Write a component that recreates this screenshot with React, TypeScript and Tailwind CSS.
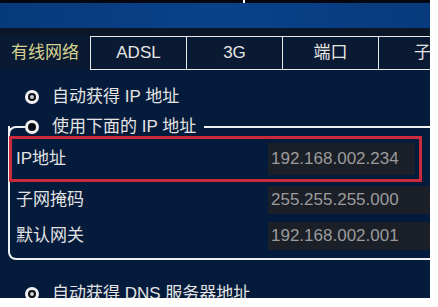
const tabs = ["有线网络", "ADSL", "3G", "端口", "子网"];

const rows = [
  { label: "IP地址", value: "192.168.002.234", boxed: true, gap: "" },
  { label: "子网掩码", value: "255.255.255.000", boxed: false, gap: "mt-[4px]" },
  { label: "默认网关", value: "192.168.002.001", boxed: false, gap: "mt-[8px]" },
];

function Radio({ checked }: { checked: boolean }) {
  return (
    <span className="flex h-[14px] w-[14px] shrink-0 items-center justify-center rounded-full border-[3px] border-[#f2f2f2] bg-[#0c0c14]">
      {checked && <span className="h-[4px] w-[4px] rounded-full bg-[#cfcfcf]" />}
    </span>
  );
}

export default function App() {
  return (
    <div className="h-[307px] w-[438px] overflow-hidden bg-white font-['Liberation_Sans','Noto_Sans_CJK_SC',sans-serif]">
      <div className="flex h-[298px] w-[430px] flex-col overflow-hidden bg-[#051b3b]">
        <div className="relative h-[3px] shrink-0 bg-[#03070f]">
          <span className="absolute left-[243px] top-0 h-[3px] w-[2px] bg-white" />
        </div>
        <div className="h-[25px] shrink-0 bg-gradient-to-r from-[#073a7c] via-[#0a4189] to-[#073b7e]" />
        <div className="h-[8px] shrink-0 bg-[#0b1628]" />

        <div className="flex h-[34px] shrink-0 overflow-hidden bg-[#0a1a33]">
          {tabs.map((t, i) => (
            <div
              key={t}
              className={
                i === 0
                  ? "flex w-[90px] shrink-0 items-center justify-center text-[17px] text-[#d6d38e]"
                  : i === 4
                    ? "flex w-[96px] shrink-0 items-center border-y border-l border-[#e8e8e8] pl-[35px] text-[17px] text-[#e6e6e6]"
                    : "flex w-[96px] shrink-0 items-center justify-center border-y border-l border-[#e8e8e8] text-[17px] text-[#e6e6e6]"
              }
            >
              <span className="whitespace-nowrap">{t}</span>
            </div>
          ))}
        </div>

        <div className="flex shrink-0 flex-col pl-[8px] pt-[17px]">
          <div className="flex h-[20px] items-center gap-[13px] pl-[17px] text-[17px] text-[#e4e4e4]">
            <Radio checked />
            <span>自动获得 IP 地址</span>
          </div>

          <div className="mt-[10px] flex h-[20px] items-center">
            <span className="mt-[9px] h-[10px] w-[17px] shrink-0 self-start rounded-tl-[8px] border-l-2 border-t-2 border-[#f0f0f0]" />
            <div className="flex items-center gap-[13px] pr-[8px] text-[17px] text-[#e4e4e4]">
              <Radio checked={false} />
              <span>使用下面的 IP 地址</span>
            </div>
            <span className="h-[2px] flex-1 bg-[#f0f0f0]" />
          </div>

          <div className="-mt-[11px] flex flex-col rounded-bl-[8px] border-b-2 border-l-2 border-[#f0f0f0] pb-[8px] pt-[10px]">
            {rows.map((r) => (
              <div
                key={r.label}
                className={
                  r.boxed
                    ? "-ml-[1px] mr-[8px] flex h-[46px] items-center border-[3px] border-[#cc2a3a] pl-[4px]"
                    : `${r.gap} flex h-[28px] items-center pl-[6px]`
                }
              >
                <span className="w-[252px] shrink-0 text-[17px] text-[#e2e2e2]">{r.label}</span>
                <span
                  className={
                    r.boxed
                      ? "mr-[4px] flex h-[32px] flex-1 items-center bg-[#1b1f28] pl-[3px] text-[17px] text-[#9b9b9b]"
                      : "flex h-[28px] flex-1 items-center bg-[#1b1f28] pl-[3px] text-[17px] text-[#9b9b9b]"
                  }
                >
                  {r.value}
                </span>
              </div>
            ))}
          </div>

          <div className="mt-[24px] flex h-[20px] items-center gap-[13px] pl-[17px] text-[17px] text-[#e4e4e4]">
            <Radio checked />
            <span>自动获得 DNS 服务器地址</span>
          </div>
        </div>
      </div>
    </div>
  );
}
